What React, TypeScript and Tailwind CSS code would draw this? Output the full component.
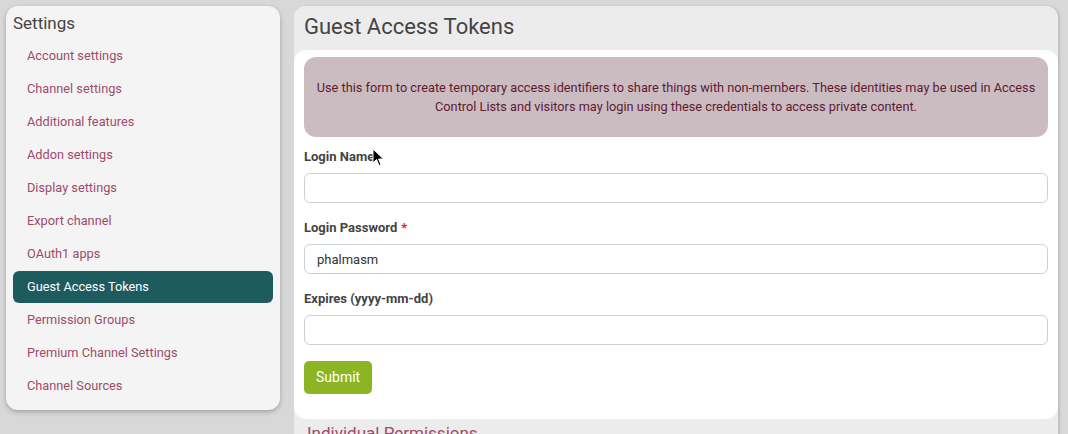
import React from 'react'

const navItems = [
  'Account settings',
  'Channel settings',
  'Additional features',
  'Addon settings',
  'Display settings',
  'Export channel',
  'OAuth1 apps',
  'Guest Access Tokens',
  'Permission Groups',
  'Premium Channel Settings',
  'Channel Sources',
]

const Field = ({ label, required, value }: { label: string; required?: boolean; value?: string }) => (
  <div className="mb-4">
    <label className="block h-[18px] leading-[18px] mb-[7px] text-[13px] font-bold text-[#444]">
      {label}
      {required && <span className="text-[#d9232d] ml-1">*</span>}
    </label>
    <input
      readOnly
      value={value ?? ''}
      className="block w-full h-[30px] px-3 text-[13px] text-[#333] bg-white border border-[#ccd1d8] rounded-md outline-none"
    />
  </div>
)

const App = () => {
  return (
    <div className="relative min-h-[434px] bg-[#d8d8d8] font-['Roboto',sans-serif] flex items-start gap-[14px] pl-[6px] pr-[10px] pt-[6px] overflow-hidden">
      {/* Sidebar */}
      <aside className="w-[274px] shrink-0 bg-[#f4f4f4] rounded-xl shadow-[0_2px_5px_rgba(0,0,0,0.25)] px-[7px] pb-2">
        <h2 className="pt-1 mb-1 text-[17px] leading-[26px] text-[#444]">Settings</h2>
        <nav className="flex flex-col gap-px">
          {navItems.map((item) => (
            <a
              key={item}
              href="#"
              className={
                item === 'Guest Access Tokens'
                  ? 'h-8 flex items-center px-[14px] text-[12.75px] rounded-md bg-[#1d5b5f] text-white'
                  : 'h-8 flex items-center px-[14px] text-[12.75px] text-[#9d4b6b]'
              }
            >
              {item}
            </a>
          ))}
        </nav>
      </aside>

      {/* Main */}
      <main className="flex-1 bg-[#ececec] rounded-xl shadow-[2px_0_2px_rgba(0,0,0,0.12)]">
        <div className="h-[41px] flex items-center px-[10px] bg-[#ececec] rounded-t-xl">
          <h1 className="text-[22px] text-[#444]">Guest Access Tokens</h1>
        </div>
        <div className="mt-[3px] bg-white rounded-xl px-[10px] pt-[7px] pb-[25px]">
          <div className="bg-[#cbbcc2] rounded-xl py-[21px] px-3 text-center text-[12.75px] leading-[19px] text-[#5e1a30]">
            Use this form to create temporary access identifiers to share things with non-members. These identities may be used in Access Control Lists and visitors may login using these credentials to access private content.
          </div>
          <div className="mt-[11px]">
            <Field label="Login Name" />
            <Field label="Login Password" required value="phalmasm" />
            <Field label="Expires (yyyy-mm-dd)" />
            <button className="h-[33px] px-3 bg-[#8cb524] text-white text-[14px] rounded-[5px]">Submit</button>
          </div>
        </div>
        <div className="px-[13px] pt-[2px] pb-2">
          <h3 className="text-[17px] leading-[24px] text-[#9d4b6b]">Individual Permissions</h3>
        </div>
      </main>

      {/* Mouse cursor */}
      <svg className="absolute left-[372px] top-[148px]" width="14" height="20" viewBox="0 0 14 20">
        <path d="M1 1 L1 15 L4.5 11.5 L7 17.5 L9 16.7 L6.6 11 L11.5 11 Z" fill="#000" stroke="#fff" strokeWidth="1" />
      </svg>
    </div>
  )
}

export default App
